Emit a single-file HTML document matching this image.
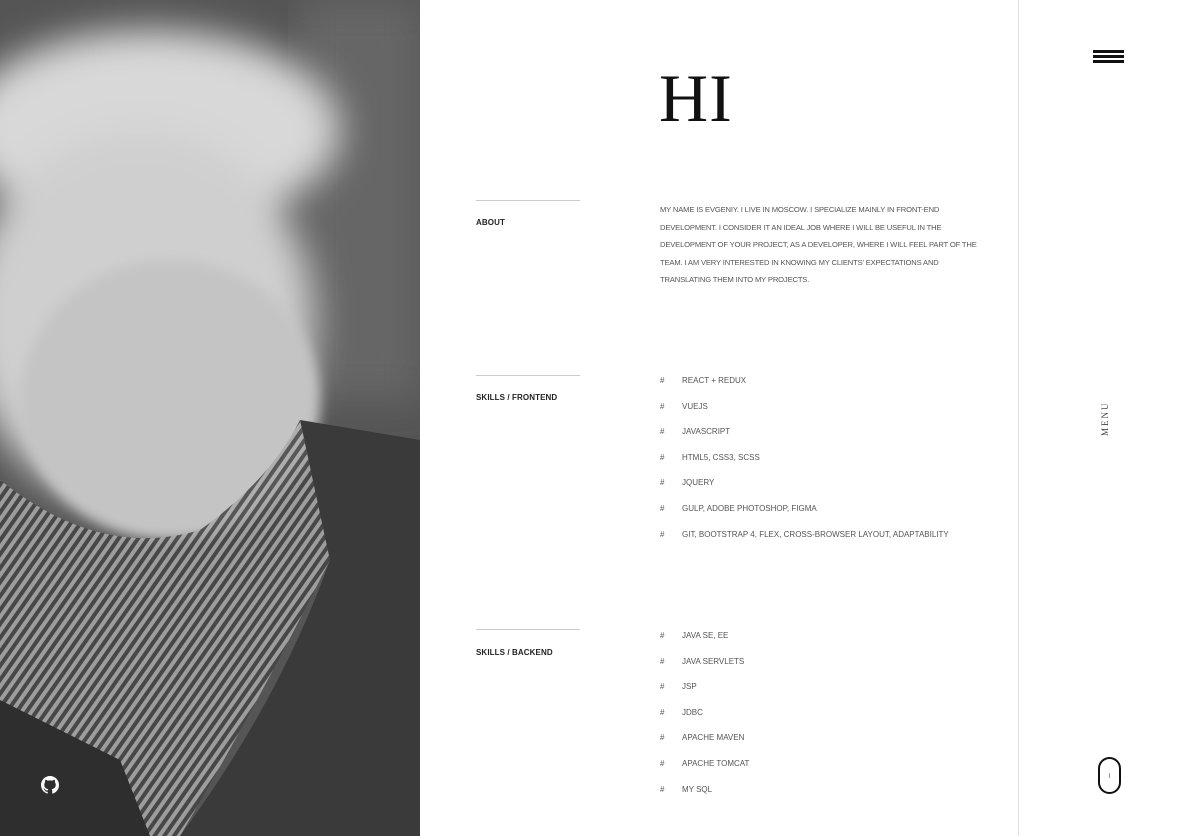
<!DOCTYPE html>
<html><head><style>
*{margin:0;padding:0;box-sizing:border-box}
body{width:1189px;height:836px;overflow:hidden;background:#fff;font-family:"Liberation Sans",sans-serif;position:relative}
.photo{position:absolute;left:0;top:0;width:420px;height:836px;overflow:hidden;background:#4a4a4a}
.rule{position:absolute;left:1018px;top:0;width:1px;height:836px;background:#e2e2e2}
.hi{position:absolute;left:659px;top:59px;font-family:"Liberation Serif",serif;font-size:68px;color:#111;letter-spacing:1px}
.line{position:absolute;left:476px;width:104px;height:1px;background:#ccc}
.lbl{position:absolute;left:476px;font-size:8px;color:#222;font-weight:bold;letter-spacing:.1px}
.about{position:absolute;left:660px;top:201px;width:340px;font-size:7.6px;line-height:17.5px;color:#555;letter-spacing:-.15px}
.list{position:absolute;left:660px;font-size:8px;color:#555}
.list div{height:25.6px;position:relative;padding-left:22px}
.list div:before{content:"#";position:absolute;left:0}
.ham{position:absolute;left:1093px;width:31px;height:3px;background:#111}
.menu{position:absolute;left:1100px;top:404px;font-family:"Liberation Serif",serif;font-size:9px;color:#444;transform-origin:0 0;transform:rotate(-90deg) translate(-32px,0);letter-spacing:2px}
.mouse{position:absolute;left:1098px;top:757px;width:23px;height:37px;border:2px solid #111;border-radius:12px}
.mouse:after{content:"";position:absolute;left:9px;top:14px;width:1px;height:5px;background:#999}
</style></head><body>
<div class="photo">
<svg width="420" height="836" viewBox="0 0 420 836">
<defs><filter id="b"><feGaussianBlur stdDeviation="18"/></filter><filter id="s"><feGaussianBlur stdDeviation="6"/></filter>
<pattern id="k" width="8" height="8" patternUnits="userSpaceOnUse" patternTransform="rotate(35)"><rect width="8" height="8" fill="#444"/><rect width="4" height="8" fill="#aaa"/></pattern></defs>
<rect width="420" height="836" fill="#555"/>
<rect x="300" width="120" height="400" fill="#666" filter="url(#b)"/>
<g filter="url(#b)">
<ellipse cx="150" cy="130" rx="190" ry="100" fill="#d8d8d8"/>
<ellipse cx="140" cy="320" rx="175" ry="190" fill="#cfcfcf"/>
</g>
<ellipse cx="170" cy="400" rx="150" ry="140" fill="#c4c4c4" filter="url(#s)"/>
<path d="M0 480 Q100 560 200 530 Q270 480 300 420 L330 560 Q260 700 180 836 L0 836Z" fill="url(#k)" opacity=".85"/>
<path d="M300 420 L420 440 L420 836 L180 836 Q280 700 330 560Z" fill="#3a3a3a"/>
<path d="M0 700 L120 760 L150 836 L0 836Z" fill="#2e2e2e"/>
</svg>
<svg style="position:absolute;left:41px;top:776px" width="18" height="18" viewBox="0 0 16 16"><path fill="#fff" d="M8 0C3.58 0 0 3.58 0 8c0 3.54 2.29 6.53 5.47 7.59.4.07.55-.17.55-.38v-1.33c-2.23.48-2.7-1.07-2.7-1.07-.36-.92-.89-1.17-.89-1.17-.73-.5.05-.49.05-.49.8.06 1.23.83 1.23.83.72 1.22 1.87.87 2.33.66.07-.52.28-.87.51-1.07-1.78-.2-3.64-.89-3.64-3.95 0-.87.31-1.59.82-2.15-.08-.2-.36-1.02.08-2.12 0 0 .67-.21 2.2.82a7.6 7.6 0 014 0c1.53-1.04 2.2-.82 2.2-.82.44 1.1.16 1.92.08 2.12.51.56.82 1.27.82 2.15 0 3.07-1.87 3.75-3.65 3.95.29.25.54.73.54 1.48v2.2c0 .21.15.46.55.38A8.01 8.01 0 0016 8c0-4.42-3.58-8-8-8z"/></svg>
</div>
<div class="rule"></div>
<div class="hi">HI</div>
<div class="line" style="top:200px"></div><div class="lbl" style="top:218px">ABOUT</div>
<div class="about">MY NAME IS EVGENIY. I LIVE IN MOSCOW. I SPECIALIZE MAINLY IN FRONT-END<br>DEVELOPMENT. I CONSIDER IT AN IDEAL JOB WHERE I WILL BE USEFUL IN THE<br>DEVELOPMENT OF YOUR PROJECT, AS A DEVELOPER, WHERE I WILL FEEL PART OF THE<br>TEAM. I AM VERY INTERESTED IN KNOWING MY CLIENTS' EXPECTATIONS AND<br>TRANSLATING THEM INTO MY PROJECTS.</div>
<div class="line" style="top:375px"></div><div class="lbl" style="top:393px">SKILLS / FRONTEND</div>
<div class="list" style="top:376px"><div>REACT + REDUX</div><div>VUEJS</div><div>JAVASCRIPT</div><div>HTML5, CSS3, SCSS</div><div>JQUERY</div><div>GULP, ADOBE PHOTOSHOP, FIGMA</div><div>GIT, BOOTSTRAP 4, FLEX, CROSS-BROWSER LAYOUT, ADAPTABILITY</div></div>
<div class="line" style="top:629px"></div><div class="lbl" style="top:648px">SKILLS / BACKEND</div>
<div class="list" style="top:631px"><div>JAVA SE, EE</div><div>JAVA SERVLETS</div><div>JSP</div><div>JDBC</div><div>APACHE MAVEN</div><div>APACHE TOMCAT</div><div>MY SQL</div></div>
<div class="ham" style="top:50px"></div><div class="ham" style="top:55px"></div><div class="ham" style="top:60px"></div>
<div class="menu">MENU</div>
<div class="mouse"></div>
</body></html>
